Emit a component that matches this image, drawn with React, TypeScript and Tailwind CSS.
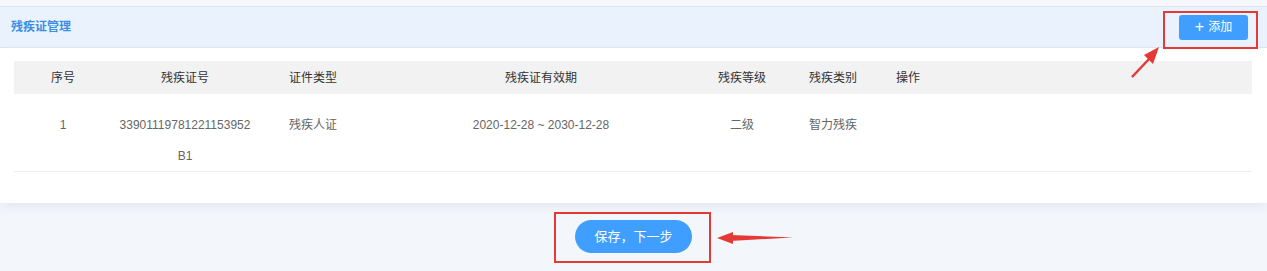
import React from "react";

const font = { fontFamily: '"Liberation Sans", "Noto Sans CJK SC", sans-serif' };

export default function App() {
  return (
    <div className="relative w-[1267px] h-[271px] overflow-hidden bg-[#f3f6fa]" style={font}>
      <div className="h-[6px] bg-[#f5f7fa]" />
      {/* header bar */}
      <div className="h-[42px] bg-[#eaf2fd] border-y border-[#dde6f1] flex items-center justify-between pl-[11px] pr-[19px]">
        <span className="text-[12px] font-bold text-[#3a8ee6]">残疾证管理</span>
        <button className="w-[69px] h-[25px] rounded-[3px] bg-[#409eff] text-white text-[12px] flex items-center justify-center gap-[4px]">
          <span className="text-[16px] leading-none font-light">+</span>
          <span>添加</span>
        </button>
      </div>
      {/* card */}
      <div className="bg-white h-[155px] pt-[13px] px-[14px] shadow-[0_4px_8px_rgba(200,212,228,0.35)]">
        <div className="w-[1238px] text-[12px]">
          <div className="grid grid-cols-[98px_146px_110px_346px_56px_126px_1fr] h-[33px] items-center bg-[#f2f2f2] text-[#333]">
            <div className="text-center">序号</div>
            <div className="text-center">残疾证号</div>
            <div className="text-center">证件类型</div>
            <div className="text-center">残疾证有效期</div>
            <div className="text-center">残疾等级</div>
            <div className="text-center">残疾类别</div>
            <div className="text-left">操作</div>
          </div>
          <div className="grid grid-cols-[98px_146px_110px_346px_56px_126px_1fr] h-[78px] pt-[16px] leading-[31px] text-[#666] border-b border-[#ebeef5] items-start">
            <div className="text-center">1</div>
            <div className="text-center whitespace-nowrap">
              <div>33901119781221153952</div>
              <div>B1</div>
            </div>
            <div className="text-center">残疾人证</div>
            <div className="text-center">2020-12-28 ~ 2030-12-28</div>
            <div className="text-center">二级</div>
            <div className="text-center">智力残疾</div>
            <div />
          </div>
        </div>
      </div>
      {/* bottom */}
      <div className="flex justify-center pt-[17px]">
        <button className="w-[117px] h-[33px] rounded-full bg-[#409eff] text-white text-[13px]">保存，下一步</button>
      </div>

      {/* annotations */}
      <div className="absolute left-[1163px] top-[11px] w-[95px] h-[38px] border-2 border-[#e53935]" />
      <div className="absolute left-[554px] top-[212px] w-[157px] h-[51px] border-2 border-[#e53935]" />
      <svg className="absolute left-0 top-0" width="1267" height="271">
        <line x1="1132" y1="77" x2="1150" y2="58" stroke="#e53935" strokeWidth="2.5" />
        <polygon points="1159,47 1144,55 1153,64" fill="#e53935" />
        <polygon points="717,238 733,232 733,244" fill="#e53935" />
        <polygon points="730,235 793,237.5 730,241" fill="#e53935" />
      </svg>
    </div>
  );
}
